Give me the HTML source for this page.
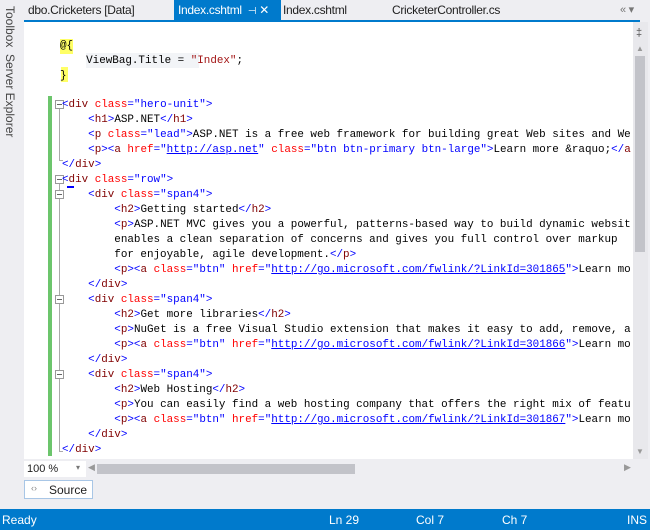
<!DOCTYPE html>
<html><head><meta charset="utf-8"><style>
body{margin:0;width:650px;height:530px;overflow:hidden;background:#eeeef2;font-family:"Liberation Sans",sans-serif;position:relative}
.side{position:absolute;left:0;top:0;width:22px;height:508px;background:#eeeef2}
.vt{position:absolute;left:3px;font-size:12px;color:#444;writing-mode:vertical-rl}
.tab{position:absolute;top:3px;font-size:12px;color:#1e1e1e;letter-spacing:-0.3px}
.act{position:absolute;left:174px;top:0;width:107px;height:21px;background:#007acc}
.bl{position:absolute;left:24px;top:20px;width:616px;height:2px;background:#007acc}
.ed{position:absolute;left:24px;top:22px;width:609px;height:437px;background:#fff;overflow:hidden}
.code{position:absolute;font-family:"Liberation Mono",monospace;font-size:10.9px;white-space:pre;color:#000;line-height:15px}
.d{color:#0000ff}.e{color:#800000}.a{color:#ff0000}.v{color:#0000ff}.u{color:#0000ff;text-decoration:underline}
.vs{position:absolute;left:633px;top:22px;width:15px;height:437px;background:#e8e8ec}
.status{position:absolute;left:0;top:509px;width:650px;height:21px;background:#007acc;color:#fff;font-size:12px}
.status span{position:absolute;top:4px}
.bx{position:absolute;left:31px;width:7px;height:7px;border:1px solid #999;background:#fff}
.bx::after{content:"";position:absolute;left:1px;top:3px;width:5px;height:1px;background:#666}
.ol{position:absolute;width:1px;background:#aaa}
.ot{position:absolute;height:1px;width:4px;background:#aaa}
</style></head><body>
<div class="side"><div class="vt" style="top:6px">Toolbox</div><div class="vt" style="top:54px">Server Explorer</div></div>
<div class="act"></div>
<div class="tab" style="left:28px">dbo.Cricketers [Data]</div>
<div class="tab" style="left:178px;color:#fff">Index.cshtml &nbsp;<span style="font-size:10px">⊣</span> ✕</div>
<div class="tab" style="left:283px">Index.cshtml</div>
<div class="tab" style="left:392px">CricketerController.cs</div>
<div class="tab" style="left:620px;color:#777;font-size:11px">«&nbsp;▾</div>
<div class="bl"></div>
<div class="ed">
<div style="position:absolute;left:24px;top:74px;width:4px;height:360px;background:#6cc56c"></div>
<div style="position:absolute;left:36px;top:17px;width:13px;height:15px;background:#ffff66"></div>
<div style="position:absolute;left:37px;top:45px;width:7px;height:15px;background:#ffff66"></div>
<div style="position:absolute;left:62px;top:31px;width:113px;height:15px;background:#f2f4f7"></div>
<div class="ol" style="left:35px;top:86px;height:52px"></div><div class="ot" style="left:35px;top:138px"></div>
<div class="ol" style="left:35px;top:161px;height:268px"></div><div class="ot" style="left:35px;top:429px"></div>
<div class="bx" style="top:78px"></div>
<div class="bx" style="top:153px"></div>
<div class="bx" style="top:168px"></div>
<div class="bx" style="top:273px"></div>
<div class="bx" style="top:348px"></div>
<div class="code" style="left:36px;top:17px">@{
    ViewBag.Title = <span style="color:#a31515">"Index"</span>;
}</div>
<div class="code" style="left:38px;top:76px"><span class="d">&lt;</span><span class="e">div</span> <span class="a">class</span><span class="d">="hero-unit"&gt;</span>
    <span class="d">&lt;</span><span class="e">h1</span><span class="d">&gt;</span>ASP.NET<span class="d">&lt;/</span><span class="e">h1</span><span class="d">&gt;</span>
    <span class="d">&lt;</span><span class="e">p</span> <span class="a">class</span><span class="d">="lead"&gt;</span>ASP.NET is a free web framework for building great Web sites and We
    <span class="d">&lt;</span><span class="e">p</span><span class="d">&gt;&lt;</span><span class="e">a</span> <span class="a">href</span><span class="d">="</span><span class="u">http://asp.net</span><span class="d">"</span> <span class="a">class</span><span class="d">="btn btn-primary btn-large"&gt;</span>Learn more &amp;raquo;<span class="d">&lt;/</span><span class="e">a</span>
<span class="d">&lt;/</span><span class="e">div</span><span class="d">&gt;</span>
<span class="d">&lt;</span><span class="e">div</span> <span class="a">class</span><span class="d">="row"&gt;</span>
    <span class="d">&lt;</span><span class="e">div</span> <span class="a">class</span><span class="d">="span4"&gt;</span>
        <span class="d">&lt;</span><span class="e">h2</span><span class="d">&gt;</span>Getting started<span class="d">&lt;/</span><span class="e">h2</span><span class="d">&gt;</span>
        <span class="d">&lt;</span><span class="e">p</span><span class="d">&gt;</span>ASP.NET MVC gives you a powerful, patterns-based way to build dynamic websit
        enables a clean separation of concerns and gives you full control over markup
        for enjoyable, agile development.<span class="d">&lt;/</span><span class="e">p</span><span class="d">&gt;</span>
        <span class="d">&lt;</span><span class="e">p</span><span class="d">&gt;&lt;</span><span class="e">a</span> <span class="a">class</span><span class="d">="btn"</span> <span class="a">href</span><span class="d">="</span><span class="u">http://go.microsoft.com/fwlink/?LinkId=301865</span><span class="d">"&gt;</span>Learn mo
    <span class="d">&lt;/</span><span class="e">div</span><span class="d">&gt;</span>
    <span class="d">&lt;</span><span class="e">div</span> <span class="a">class</span><span class="d">="span4"&gt;</span>
        <span class="d">&lt;</span><span class="e">h2</span><span class="d">&gt;</span>Get more libraries<span class="d">&lt;/</span><span class="e">h2</span><span class="d">&gt;</span>
        <span class="d">&lt;</span><span class="e">p</span><span class="d">&gt;</span>NuGet is a free Visual Studio extension that makes it easy to add, remove, a
        <span class="d">&lt;</span><span class="e">p</span><span class="d">&gt;&lt;</span><span class="e">a</span> <span class="a">class</span><span class="d">="btn"</span> <span class="a">href</span><span class="d">="</span><span class="u">http://go.microsoft.com/fwlink/?LinkId=301866</span><span class="d">"&gt;</span>Learn mo
    <span class="d">&lt;/</span><span class="e">div</span><span class="d">&gt;</span>
    <span class="d">&lt;</span><span class="e">div</span> <span class="a">class</span><span class="d">="span4"&gt;</span>
        <span class="d">&lt;</span><span class="e">h2</span><span class="d">&gt;</span>Web Hosting<span class="d">&lt;/</span><span class="e">h2</span><span class="d">&gt;</span>
        <span class="d">&lt;</span><span class="e">p</span><span class="d">&gt;</span>You can easily find a web hosting company that offers the right mix of featu
        <span class="d">&lt;</span><span class="e">p</span><span class="d">&gt;&lt;</span><span class="e">a</span> <span class="a">class</span><span class="d">="btn"</span> <span class="a">href</span><span class="d">="</span><span class="u">http://go.microsoft.com/fwlink/?LinkId=301867</span><span class="d">"&gt;</span>Learn mo
    <span class="d">&lt;/</span><span class="e">div</span><span class="d">&gt;</span>
<span class="d">&lt;/</span><span class="e">div</span><span class="d">&gt;</span></div>
<div style="position:absolute;left:43px;top:164px;width:7px;height:2px;background:#0000ff"></div>
</div>
<div class="vs">
<div style="position:absolute;left:3px;top:5px;font-size:11px;color:#555">‡</div>
<div style="position:absolute;left:3px;top:22px;font-size:8px;color:#999">▲</div>
<div style="position:absolute;left:2px;top:34px;width:10px;height:196px;background:#c2c3c9"></div>
<div style="position:absolute;left:3px;top:425px;font-size:8px;color:#999">▼</div>
</div>
<div style="position:absolute;left:24px;top:461px;width:62px;height:16px;background:#fff;font-size:11px;color:#1e1e1e"><span style="position:absolute;left:3px;top:2px">100 %</span><span style="position:absolute;left:52px;top:2px;font-size:8px;color:#777">▾</span></div>
<div style="position:absolute;left:88px;top:462px;font-size:9px;color:#999">◀</div>
<div style="position:absolute;left:97px;top:464px;width:258px;height:10px;background:#c2c3c9"></div>
<div style="position:absolute;left:624px;top:462px;font-size:9px;color:#999">▶</div>
<div style="position:absolute;left:24px;top:480px;width:69px;height:19px;background:#fff;border:1px solid #a8c6e6;box-sizing:border-box;font-size:12px;color:#1e1e1e"><span style="position:absolute;left:6px;top:2px;font-size:9px;color:#888">‹›</span><span style="position:absolute;left:24px;top:2px">Source</span></div>
<div class="status"><span style="left:2px">Ready</span><span style="left:329px">Ln 29</span><span style="left:416px">Col 7</span><span style="left:502px">Ch 7</span><span style="left:627px">INS</span></div>
</body></html>
